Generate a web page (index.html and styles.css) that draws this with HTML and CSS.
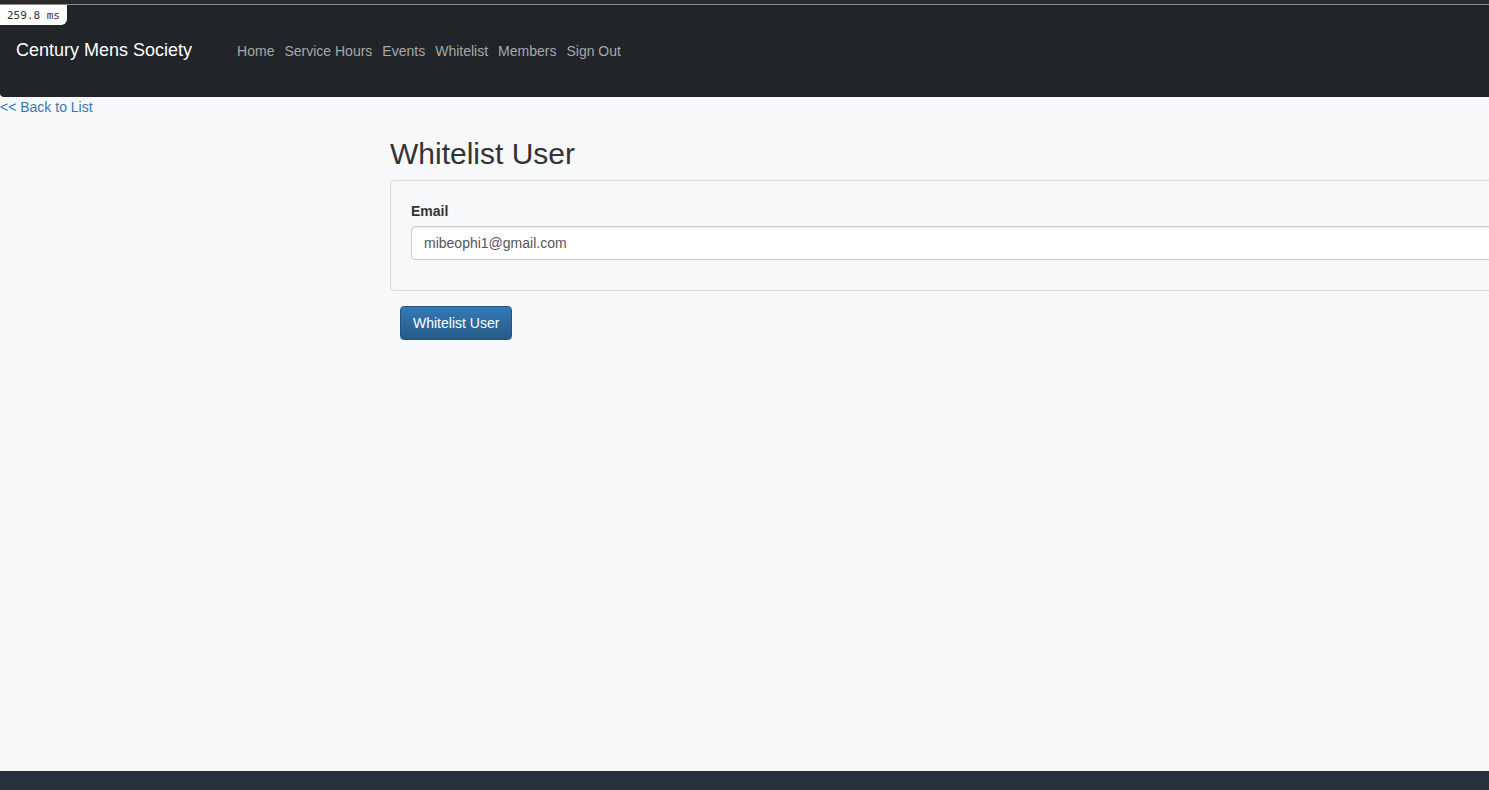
FILE: index.html
```html
<!DOCTYPE html>
<html>
<head>
<meta charset="utf-8">
<link rel="stylesheet" href="styles.css">
</head>
<body>
<div class="topline"></div>
<header class="navbar">
  <div class="timer"><span class="timer-text">259.8 ms</span></div>
  <div class="navrow">
    <a class="brand" href="#">Century Mens Society</a>
    <nav class="links">
      <a href="#">Home</a>
      <a href="#">Service Hours</a>
      <a href="#">Events</a>
      <a href="#">Whitelist</a>
      <a href="#">Members</a>
      <a href="#">Sign Out</a>
    </nav>
  </div>
</header>
<main class="page">
  <a class="back" href="#">&lt;&lt; Back to List</a>
  <section class="content">
    <h1 class="title">Whitelist User</h1>
    <div class="well">
      <label class="label">Email</label>
      <div class="input">mibeophi1@gmail.com</div>
    </div>
    <button class="btn">Whitelist User</button>
  </section>
</main>
<footer class="footer"></footer>
</body>
</html>
```

FILE: styles.css
```css
html, body {
  margin: 0;
  padding: 0;
  height: 790px;
  overflow: hidden;
}
body {
  background: #f7f8fa;
  font-family: "Liberation Sans", Arial, sans-serif;
  font-size: 14px;
  color: #333;
  display: flex;
  flex-direction: column;
}
.topline {
  height: 4px;
  background: #2b2b2b;
  border-bottom: 1px solid #8a8a8a;
}
.navbar {
  height: 92px;
  background: #212429;
  border-bottom-left-radius: 4px;
  position: relative;
}
.timer {
  position: absolute;
  left: 0;
  top: 0;
  width: 67px;
  height: 20px;
  background: #fff;
  border-bottom-right-radius: 6px;
  padding-left: 7px;
  box-sizing: border-box;
}
.timer-text {
  font-family: "DejaVu Sans Mono", "Liberation Mono", monospace;
  font-size: 11px;
  color: #333;
  line-height: 21px;
}
.navrow {
  display: flex;
  align-items: center;
  padding-top: 35px;
  padding-left: 16px;
}
.brand {
  color: #fff;
  font-size: 18px;
  text-decoration: none;
  margin-right: 45px;
}
.links {
  display: flex;
  gap: 10px;
}
.links a {
  color: #a8a9ab;
  text-decoration: none;
  font-size: 14px;
}
.page {
  flex: 1;
  overflow: hidden;
}
.back {
  display: block;
  color: #337ab7;
  text-decoration: none;
  font-size: 14px;
  line-height: 20px;
}
.content {
  margin-left: 390px;
  width: 1200px;
}
.title {
  font-weight: 500;
  font-size: 30px;
  margin: 19px 0 8px;
  line-height: 36px;
  color: #333;
}
.well {
  border: 1px solid #dcdcdc;
  border-radius: 4px;
  padding: 20px;
  background: #f7f8fa;
  height: 69px;
}
.label {
  display: block;
  font-weight: bold;
  font-size: 14px;
  margin: 2px 0 7px;
  color: #333;
}
.input {
  height: 34px;
  box-sizing: border-box;
  border: 1px solid #ccc;
  border-radius: 4px;
  background: #fff;
  padding: 0 12px;
  line-height: 32px;
  color: #555;
  font-size: 14px;
  box-shadow: inset 0 1px 1px rgba(0,0,0,.075);
}
.btn {
  margin: 15px 0 0 10px;
  height: 34px;
  padding: 0 12px;
  border: 1px solid #245580;
  border-radius: 4px;
  background: linear-gradient(to bottom, #337ab7, #265a88);
  color: #fff;
  font-family: "Liberation Sans", Arial, sans-serif;
  font-size: 14px;
}
.footer {
  height: 19px;
  background: #27323d;
}
```
